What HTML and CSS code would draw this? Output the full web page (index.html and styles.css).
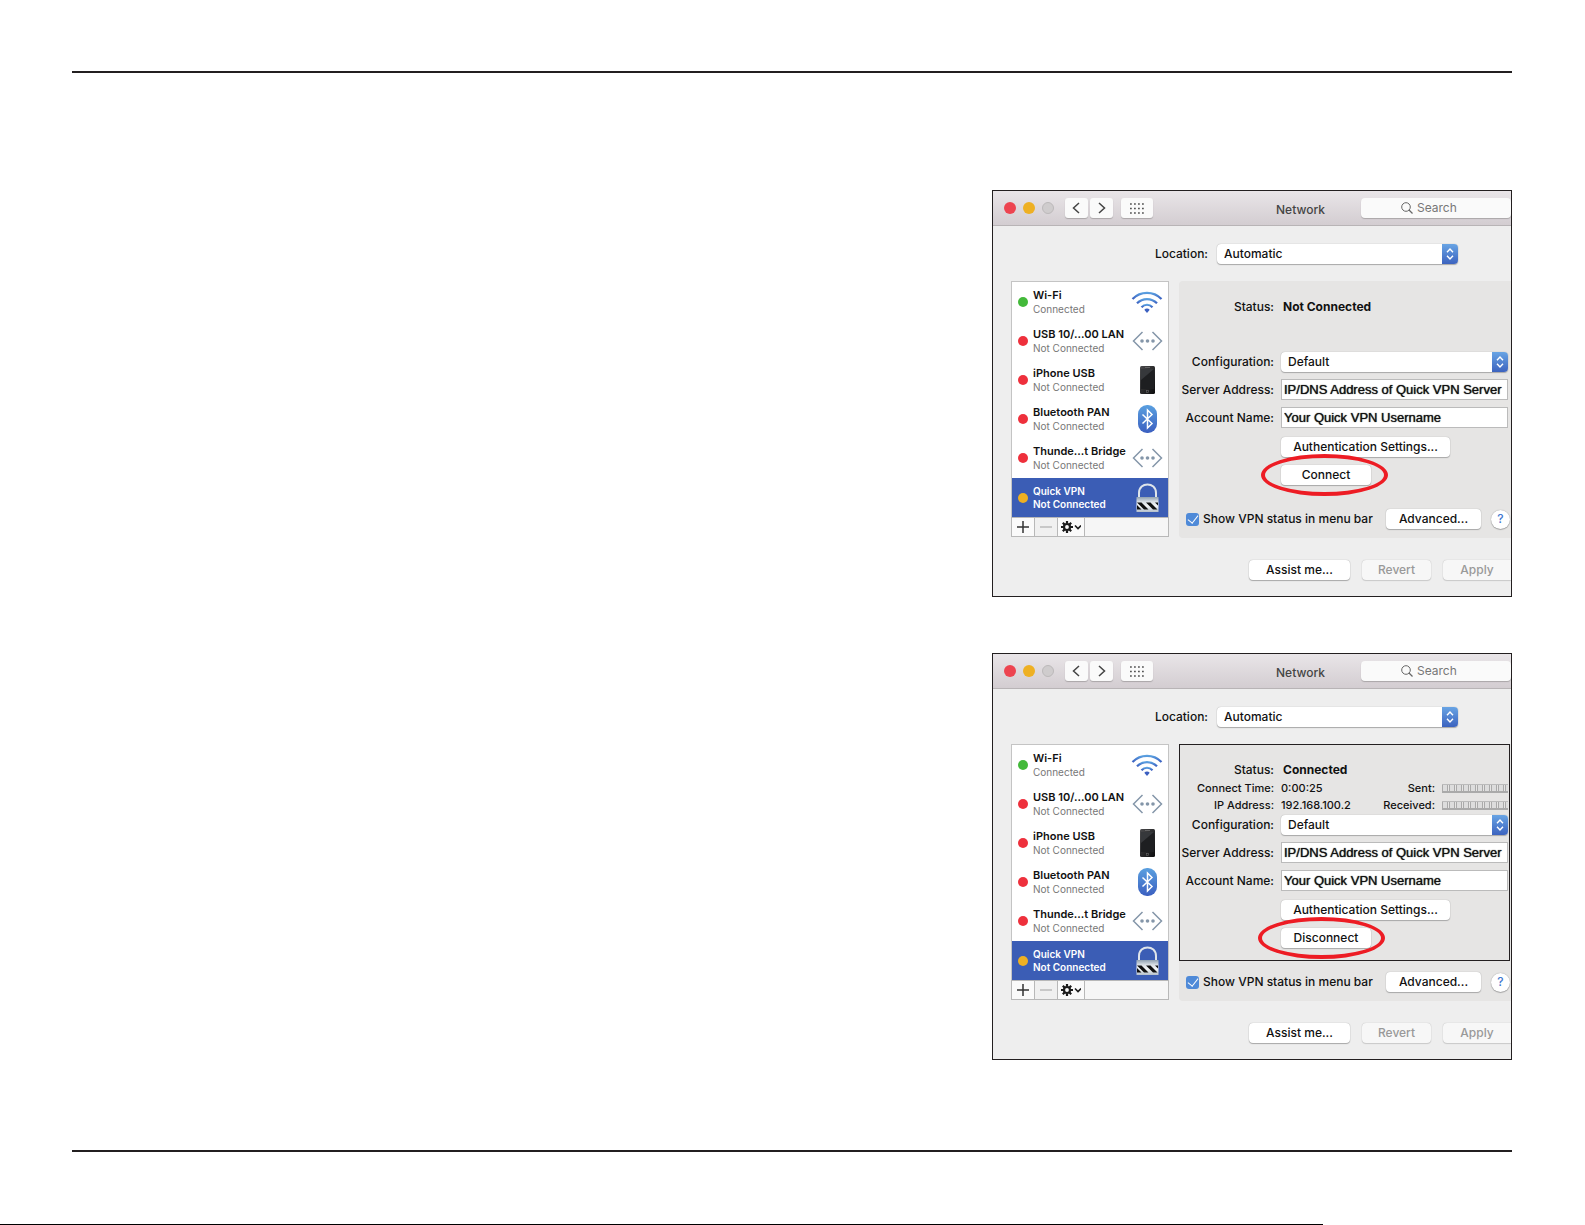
FILE: index.html
```html
<!DOCTYPE html>
<html lang="en">
<head>
    <meta charset="UTF-8">
    <meta name="viewport" content="width=device-width, initial-scale=1.0">
    <title>Quick VPN - Mac OS X</title>
    <link rel="stylesheet" href="styles.css">
</head>
<body>
    <!-- Shared icons -->
    <svg class="sprite" aria-hidden="true">
        <defs>
            <linearGradient id="blueFade" x1="0" y1="0" x2="0" y2="1">
                <stop offset="0" stop-color="#5aa0e0"/>
                <stop offset="1" stop-color="#3b5fc0"/>
            </linearGradient>
            <linearGradient id="steel" x1="0" y1="0" x2="0" y2="1">
                <stop offset="0" stop-color="#8fa0b0"/>
                <stop offset="0.3" stop-color="#d6dce2"/>
                <stop offset="0.6" stop-color="#f4f6f7"/>
                <stop offset="1" stop-color="#b4bfca"/>
            </linearGradient>
            <linearGradient id="phoneBody" x1="0" y1="0" x2="1" y2="1">
                <stop offset="0" stop-color="#4a4a4c"/>
                <stop offset="1" stop-color="#0c0c0d"/>
            </linearGradient>
        </defs>
        <symbol id="chevron-left" viewBox="0 0 10 14"><path d="M7 2 1.500 7 7 12" fill="none" stroke="#444" stroke-width="1.500"/></symbol>
        <symbol id="chevron-right" viewBox="0 0 10 14"><path d="M2 2 7.500 7 2 12" fill="none" stroke="#444" stroke-width="1.500"/></symbol>
        <symbol id="dots" viewBox="0 0 14 11">
            <path d="M0 1h14M0 5.500h14M0 10h14" stroke="#555" stroke-width="1.600" stroke-dasharray="1.800 2.200"/>
        </symbol>
        <symbol id="search" viewBox="0 0 12 12"><circle cx="5" cy="5" r="4.300" fill="none" stroke="#666"/><path d="M8 8l3.500 3.500" stroke="#666" stroke-width="1.200"/></symbol>
        <symbol id="updown" viewBox="0 0 16 20"><path d="M5 8.200 8 5l3 3.200M5 11.800 8 15l3-3.200" fill="none" stroke="#fff" stroke-width="1.400"/></symbol>
        <symbol id="wifi" viewBox="0 0 32 24">
            <g fill="none" stroke="url(#blueFade)" stroke-width="2.200">
                <path d="M1.500 9C9.500 .8 22.500 .8 30.500 9"/>
                <path d="M6 13.300C11.500 7.600 20.500 7.600 26 13.300"/>
                <path d="M10.500 17.200C13.500 13.900 18.500 13.900 21.500 17.200"/>
            </g>
            <path d="M13.300 19.700c1.600-1.500 3.800-1.500 5.400 0L16 23z" fill="#3b5fc0"/>
        </symbol>
        <symbol id="ethernet" viewBox="0 0 32 24">
            <path d="M11.500 3 2.500 12l9 9M21.500 3 30.500 12l-9 9" fill="none" stroke="#8496a9" stroke-width="1.500"/>
            <circle cx="11" cy="12" r="1.800" fill="#8496a9"/><circle cx="16.500" cy="12" r="1.800" fill="#8496a9"/><circle cx="22" cy="12" r="1.800" fill="#8496a9"/>
        </symbol>
        <symbol id="phone" viewBox="0 0 32 30">
            <rect x="9" y="1" width="15" height="28" rx="1.500" fill="url(#phoneBody)"/>
            <rect x="10" y="4" width="13" height="20" fill="#1e1f21"/>
            <path d="M10 4h13L10 15z" fill="#36383b"/>
            <path d="M14 2.500h5" stroke="#777" stroke-width=".7"/>
            <rect x="15.300" y="25.500" width="2.200" height="2" fill="none" stroke="#666" stroke-width=".6"/>
        </symbol>
        <symbol id="bluetooth" viewBox="0 0 32 30">
            <rect x="7" y="1" width="19" height="28" rx="9" fill="url(#blueFade)"/>
            <path d="M11.500 10.500 21 19.500l-4.500 4.500V6l4.500 4.500-9.500 9" fill="none" stroke="#fff" stroke-width="1.500"/>
        </symbol>
        <symbol id="lock" viewBox="0 0 32 30">
            <path d="M8 15v-5c0-11.500 17-11.500 17 0v5" fill="none" stroke="#dfe5ea" stroke-width="2"/>
            <rect x="5.500" y="14" width="22" height="15" fill="url(#steel)"/>
            <path d="M6 19.500h4.500l7 7H13zM15 19.500h4.500l7 7H22zM6 22v4.500h4.500zM24 19.500h3v3z" fill="#111"/>
        </symbol>
        <symbol id="gear" viewBox="0 0 20 12">
            <circle cx="6" cy="6" r="3" fill="none" stroke="#1c1c1c" stroke-width="2.200"/>
            <path d="M6 0v2.500M6 9.500V12M0 6h2.500M9.500 6H12M1.800 1.800l1.700 1.700M8.500 8.500l1.700 1.700M1.800 10.200l1.700-1.700M8.500 3.500l1.700-1.700" stroke="#1c1c1c" stroke-width="2.200"/>
            <path d="M14 4.500l3 3 3-3" fill="none" stroke="#1c1c1c" stroke-width="1.600"/>
        </symbol>
    </svg>

    <div class="page">
        <hr class="rule">

        <main class="figures">
            <section class="window">
                <header class="toolbar">
                    <span class="light red"></span>
                    <span class="light yellow"></span>
                    <span class="light off"></span>
                    <div class="nav">
                        <button class="tool" aria-label="Back"><svg class="chevron"><use href="#chevron-left"/></svg></button>
                        <button class="tool" aria-label="Forward"><svg class="chevron"><use href="#chevron-right"/></svg></button>
                    </div>
                    <button class="tool wide" aria-label="Show all"><svg class="dots"><use href="#dots"/></svg></button>
                    <h2>Network</h2>
                    <label class="search"><svg><use href="#search"/></svg><input type="text" placeholder="Search" aria-label="Search"></label>
                </header>

                <div class="location">
                    <label for="location1">Location:</label>
                    <span class="popup">
                        <select id="location1"><option>Automatic</option></select>
                        <svg class="arrows"><use href="#updown"/></svg>
                    </span>
                </div>

                <div class="content">
                    <div class="sidebar">
                        <ul class="services">
                            <li><span class="dot green"></span><div><b>Wi-Fi</b><small>Connected</small></div><svg class="short"><use href="#wifi"/></svg></li>
                            <li><span class="dot"></span><div><b>USB 10/...00 LAN</b><small>Not Connected</small></div><svg class="short"><use href="#ethernet"/></svg></li>
                            <li><span class="dot"></span><div><b>iPhone USB</b><small>Not Connected</small></div><svg><use href="#phone"/></svg></li>
                            <li><span class="dot"></span><div><b>Bluetooth PAN</b><small>Not Connected</small></div><svg><use href="#bluetooth"/></svg></li>
                            <li><span class="dot"></span><div><b>Thunde...t Bridge</b><small>Not Connected</small></div><svg class="short"><use href="#ethernet"/></svg></li>
                            <li class="selected"><span class="dot amber"></span><div><b>Quick VPN</b><small>Not Connected</small></div><svg><use href="#lock"/></svg></li>
                        </ul>
                        <div class="actions">
                            <button aria-label="Add"><svg viewBox="0 0 12 12"><path d="M0 6h12M6 0v12" stroke="#333" stroke-width="1.500"/></svg></button>
                            <button aria-label="Remove" disabled><svg viewBox="0 0 12 12"><path d="M0 6h12" stroke="#bbb" stroke-width="1.500"/></svg></button>
                            <button class="gear" aria-label="Options"><svg><use href="#gear"/></svg></button>
                        </div>
                    </div>

                    <div class="panel">
                        <div class="details">
                            <div class="row status"><span>Status:</span><strong>Not Connected</strong></div>
                            <div class="stats"></div>
                            <div class="row">
                                <label for="config1">Configuration:</label>
                                <span class="popup">
                                    <select id="config1"><option>Default</option></select>
                                    <svg class="arrows"><use href="#updown"/></svg>
                                </span>
                            </div>
                            <div class="row field"><label for="server1">Server Address:</label><input type="text" id="server1" value="IP/DNS Address of Quick VPN Server"></div>
                            <div class="row field"><label for="account1">Account Name:</label><input type="text" id="account1" value="Your Quick VPN Username"></div>
                            <div class="buttons">
                                <button class="btn auth">Authentication Settings...</button>
                                <div class="circled"><button class="btn connect">Connect</button></div>
                            </div>
                        </div>
                        <div class="options">
                            <label><input type="checkbox" checked>Show VPN status in menu bar</label>
                            <button class="btn advanced">Advanced...</button>
                            <button class="help">?</button>
                        </div>
                    </div>
                </div>

                <footer class="footer">
                    <button class="btn assist">Assist me...</button>
                    <button class="btn revert" disabled>Revert</button>
                    <button class="btn apply" disabled>Apply</button>
                </footer>
            </section>

            <section class="window">
                <header class="toolbar">
                    <span class="light red"></span>
                    <span class="light yellow"></span>
                    <span class="light off"></span>
                    <div class="nav">
                        <button class="tool" aria-label="Back"><svg class="chevron"><use href="#chevron-left"/></svg></button>
                        <button class="tool" aria-label="Forward"><svg class="chevron"><use href="#chevron-right"/></svg></button>
                    </div>
                    <button class="tool wide" aria-label="Show all"><svg class="dots"><use href="#dots"/></svg></button>
                    <h2>Network</h2>
                    <label class="search"><svg><use href="#search"/></svg><input type="text" placeholder="Search" aria-label="Search"></label>
                </header>

                <div class="location">
                    <label for="location2">Location:</label>
                    <span class="popup">
                        <select id="location2"><option>Automatic</option></select>
                        <svg class="arrows"><use href="#updown"/></svg>
                    </span>
                </div>

                <div class="content">
                    <div class="sidebar">
                        <ul class="services">
                            <li><span class="dot green"></span><div><b>Wi-Fi</b><small>Connected</small></div><svg class="short"><use href="#wifi"/></svg></li>
                            <li><span class="dot"></span><div><b>USB 10/...00 LAN</b><small>Not Connected</small></div><svg class="short"><use href="#ethernet"/></svg></li>
                            <li><span class="dot"></span><div><b>iPhone USB</b><small>Not Connected</small></div><svg><use href="#phone"/></svg></li>
                            <li><span class="dot"></span><div><b>Bluetooth PAN</b><small>Not Connected</small></div><svg><use href="#bluetooth"/></svg></li>
                            <li><span class="dot"></span><div><b>Thunde...t Bridge</b><small>Not Connected</small></div><svg class="short"><use href="#ethernet"/></svg></li>
                            <li class="selected"><span class="dot amber"></span><div><b>Quick VPN</b><small>Not Connected</small></div><svg><use href="#lock"/></svg></li>
                        </ul>
                        <div class="actions">
                            <button aria-label="Add"><svg viewBox="0 0 12 12"><path d="M0 6h12M6 0v12" stroke="#333" stroke-width="1.500"/></svg></button>
                            <button aria-label="Remove" disabled><svg viewBox="0 0 12 12"><path d="M0 6h12" stroke="#bbb" stroke-width="1.500"/></svg></button>
                            <button class="gear" aria-label="Options"><svg><use href="#gear"/></svg></button>
                        </div>
                    </div>

                    <div class="panel">
                        <div class="details outlined">
                            <div class="row status"><span>Status:</span><strong>Connected</strong></div>
                            <div class="stats">
                                <div class="stat"><span>Connect Time:</span><span>0:00:25</span><span>Sent:</span><span class="meter"></span></div>
                                <div class="stat"><span>IP Address:</span><span>192.168.100.2</span><span>Received:</span><span class="meter"></span></div>
                            </div>
                            <div class="row">
                                <label for="config2">Configuration:</label>
                                <span class="popup">
                                    <select id="config2"><option>Default</option></select>
                                    <svg class="arrows"><use href="#updown"/></svg>
                                </span>
                            </div>
                            <div class="row field"><label for="server2">Server Address:</label><input type="text" id="server2" value="IP/DNS Address of Quick VPN Server"></div>
                            <div class="row field"><label for="account2">Account Name:</label><input type="text" id="account2" value="Your Quick VPN Username"></div>
                            <div class="buttons">
                                <button class="btn auth">Authentication Settings...</button>
                                <div class="circled"><button class="btn connect">Disconnect</button></div>
                            </div>
                        </div>
                        <div class="options">
                            <label><input type="checkbox" checked>Show VPN status in menu bar</label>
                            <button class="btn advanced">Advanced...</button>
                            <button class="help">?</button>
                        </div>
                    </div>
                </div>

                <footer class="footer">
                    <button class="btn assist">Assist me...</button>
                    <button class="btn revert" disabled>Revert</button>
                    <button class="btn apply" disabled>Apply</button>
                </footer>
            </section>
        </main>

        <hr class="rule">
    </div>
    <div class="page-edge"></div>
</body>
</html>
```

FILE: styles.css
```css
* {
    box-sizing: border-box;
}

body {
    margin: 0;
    min-height: 100vh;
    display: flex;
    flex-direction: column;
    background-color: white;
    color: #111;
    font: 500 12px/16px Inter, 'Liberation Sans', sans-serif;
}

button, input, select {
    font: inherit;
    color: inherit;
    margin: 0;
    padding: 0;
}

svg {
    display: block;
    flex: none;
}

.sprite {
    position: absolute;
    width: 0;
    height: 0;
}

.page {
    flex: 1;
    padding: 71px 73px 72px 72px;
}

.rule {
    height: 2px;
    margin: 0;
    border: none;
    background-color: #231f20;
}

.page-edge {
    width: 83.5%;
    height: 1px;
    background-color: black;
}

.figures {
    display: grid;
    grid-template-columns: minmax(520px, 36%);
    justify-content: end;
    row-gap: 56px;
    padding: 117px 0 90px;
}

/* Network window */
.window {
    border: 1px solid #231f20;
    background-color: #eee;
    overflow: hidden;
}

.toolbar {
    display: flex;
    align-items: center;
    height: 35px;
    padding-left: 11px;
    background: linear-gradient(#e9e5e8, #d3cdd1);
    border-bottom: 1px solid #b8b4b6;
}

.light {
    width: 12px;
    height: 12px;
    margin-right: 7px;
    border-radius: 50%;
}

.light.red {
    background-color: #ed4450;
}

.light.yellow {
    background-color: #eeb023;
}

.light.off {
    background-color: #cfcccd;
    border: 1px solid #bcb9ba;
}

.nav {
    display: flex;
    gap: 2px;
    margin: 0 8px 0 4px;
}

.tool {
    display: flex;
    align-items: center;
    justify-content: center;
    width: 23px;
    height: 20px;
    border: none;
    border-radius: 3px;
    background-color: #fafafa;
    box-shadow: 0 1px 1px #aaa6a8;
}

.tool.wide {
    width: 32px;
}

.chevron {
    width: 10px;
    height: 14px;
}

.dots {
    width: 14px;
    height: 11px;
}

.toolbar h2 {
    flex: 1;
    margin: 0;
    padding: 3px 36px 0 0;
    text-align: right;
    font: inherit;
    color: #444;
}

.search {
    display: flex;
    align-items: center;
    gap: 4px;
    width: 150px;
    height: 20px;
    padding-left: 40px;
    border-radius: 4px;
    background-color: #fafafa;
    box-shadow: 0 1px 1px #aaa6a8;
}

.search svg {
    width: 12px;
    height: 12px;
}

.search input {
    width: 90px;
    border: none;
    background: none;
    font-weight: 400;
}

.search input::placeholder {
    color: #777;
}

.location {
    display: grid;
    grid-template-columns: 215px 241px;
    column-gap: 9px;
    align-items: center;
    padding: 18px 0 17px;
}

.location label {
    text-align: right;
}

.popup {
    display: flex;
    height: 20px;
    border-radius: 4px;
    background-color: white;
    box-shadow: 0 0 1px #999, 0 1px 1px #aaa;
    overflow: hidden;
}

.popup select {
    appearance: none;
    flex: 1;
    padding-left: 7px;
    border: none;
    background: none;
}

.arrows {
    width: 16px;
    height: 20px;
    background: linear-gradient(#68a4e4, #3c63bf);
}

.content {
    display: flex;
    gap: 10px;
    padding-left: 18px;
}

/* Service list */
.sidebar {
    width: 158px;
}

.services {
    margin: 0;
    padding: 1px 0 0;
    list-style: none;
    background-color: white;
    border: 1px solid #c4c4c4;
    border-bottom: none;
}

.services li {
    display: flex;
    align-items: center;
    gap: 5px;
    height: 39px;
    padding: 0 5px 2px 6px;
}

.services li.selected {
    padding-bottom: 0;
    background-color: #3b5db5;
}

.services div {
    flex: 1;
    width: 0;
    white-space: nowrap;
}

.services b, .services small {
    display: block;
}

.services b {
    line-height: 15px;
    font-weight: 600;
    font-size: 11px;
}

.services small {
    font-size: 10px;
    line-height: 13px;
    font-weight: 400;
    color: #777;
}

.services svg {
    width: 32px;
    height: 30px;
}

.services svg.short {
    height: 24px;
}

.services .selected b, .services .selected small {
    color: white;
    font-size: 10px;
    line-height: 13px;
    font-weight: 600;
}

.dot {
    width: 10px;
    height: 10px;
    border-radius: 50%;
    background-color: #ee303c;
}

.dot.green {
    background-color: #43b93a;
}

.dot.amber {
    background-color: #eeb023;
}

.actions {
    display: flex;
    height: 20px;
    border: 1px solid #b8b8b8;
    background-color: #f6f6f6;
}

.actions button {
    display: flex;
    align-items: center;
    justify-content: center;
    width: 23px;
    border: none;
    border-right: 1px solid #b8b8b8;
    background-color: #fafafa;
}

.actions button:disabled {
    background-color: #f0f0f0;
}

.actions button.gear {
    width: 27px;
}

.actions svg {
    width: 12px;
    height: 12px;
}

.actions .gear svg {
    width: 20px;
}

/* Connection details */
.panel {
    flex: 1;
    background-color: #e6e5e4;
    border-radius: 4px 0 0 4px;
}

.details {
    margin-right: 1px;
    padding: 16px 1px 12px 0;
    border: 1px solid transparent;
}

.details.outlined {
    border-color: #231f20;
}

.row {
    display: grid;
    grid-template-columns: 94px 1fr;
    column-gap: 7px;
    align-items: center;
    white-space: nowrap;
}

.row label, .row > span:first-child {
    justify-self: end;
}

.status {
    height: 18px;
}

.status strong {
    padding-left: 2px;
    font-weight: 700;
}

.stats {
    height: 36px;
    padding-top: 1px;
}

.stat {
    display: grid;
    grid-template-columns: 94px 90px 57px 66px;
    column-gap: 7px;
    align-items: center;
    font-size: 11px;
    line-height: 17px;
}

.stat span:nth-child(odd) {
    justify-self: end;
}

.meter {
    height: 9px;
    background: repeating-linear-gradient(90deg, #aaa 0 1px, #ddd 1px 5px, #aaa 5px 6px, #e6e5e4 6px 7px);
    border-top: 1px solid #bbb;
    border-bottom: 2px solid #aaa;
}

.field {
    margin-top: 7px;
}

.field input {
    width: 100%;
    height: 21px;
    padding-left: 2px;
    border: 1px solid #bbb;
    background-color: white;
    font: 13px 'Liberation Sans', Arial, sans-serif;
    text-shadow: 0 0 1px #111;
}

.buttons {
    display: grid;
    justify-items: start;
    row-gap: 8px;
    margin-top: 9px;
    padding-left: 101px;
}

.btn {
    display: block;
    height: 20px;
    border: none;
    border-radius: 4px;
    background-color: white;
    box-shadow: 0 0 1px #999, 0 1px 1px #aaa;
    white-space: nowrap;
}

.btn:disabled {
    color: #999;
    background-color: #f7f7f7;
    box-shadow: 0 0 1px #aaa, 0 1px 1px #ccc;
}

.auth {
    width: 169px;
}

.connect {
    width: 90px;
}

/* Hand-drawn style marker round the button to click */
.circled {
    position: relative;
}

.circled::after {
    content: "";
    position: absolute;
    inset: -11px -17px -11px -20px;
    border: 4px solid #ed1c24;
    border-radius: 50%;
    pointer-events: none;
}

.outlined .circled::after {
    left: -23px;
    right: -14px;
}

.options {
    display: flex;
    align-items: center;
    padding: 11px 0 9px 7px;
}

.options label {
    display: flex;
    align-items: center;
    gap: 4px;
    flex: 1;
    white-space: nowrap;
}

.options input {
    appearance: none;
    display: grid;
    place-items: center;
    flex: none;
    width: 13px;
    height: 13px;
    border-radius: 3px;
    background-color: #4f8ad8;
}

.options input:checked::before {
    content: "";
    width: 5px;
    height: 9px;
    margin-bottom: 2px;
    border: solid white;
    border-width: 0 1px 1px 0;
    transform: rotate(38deg);
}

.advanced {
    width: 95px;
}

.help {
    width: 19px;
    height: 19px;
    margin: 0 1px 0 10px;
    border: none;
    border-radius: 50%;
    background-color: white;
    box-shadow: 0 0 1px #888, 0 1px 1px #aaa;
    color: #3f78d0;
}

.footer {
    display: flex;
    justify-content: flex-end;
    gap: 12px;
    padding: 22px 0 16px;
}

.assist {
    width: 101px;
}

.revert {
    width: 69px;
}

.apply {
    width: 68px;
    border-radius: 4px 0 0 4px;
}
```
